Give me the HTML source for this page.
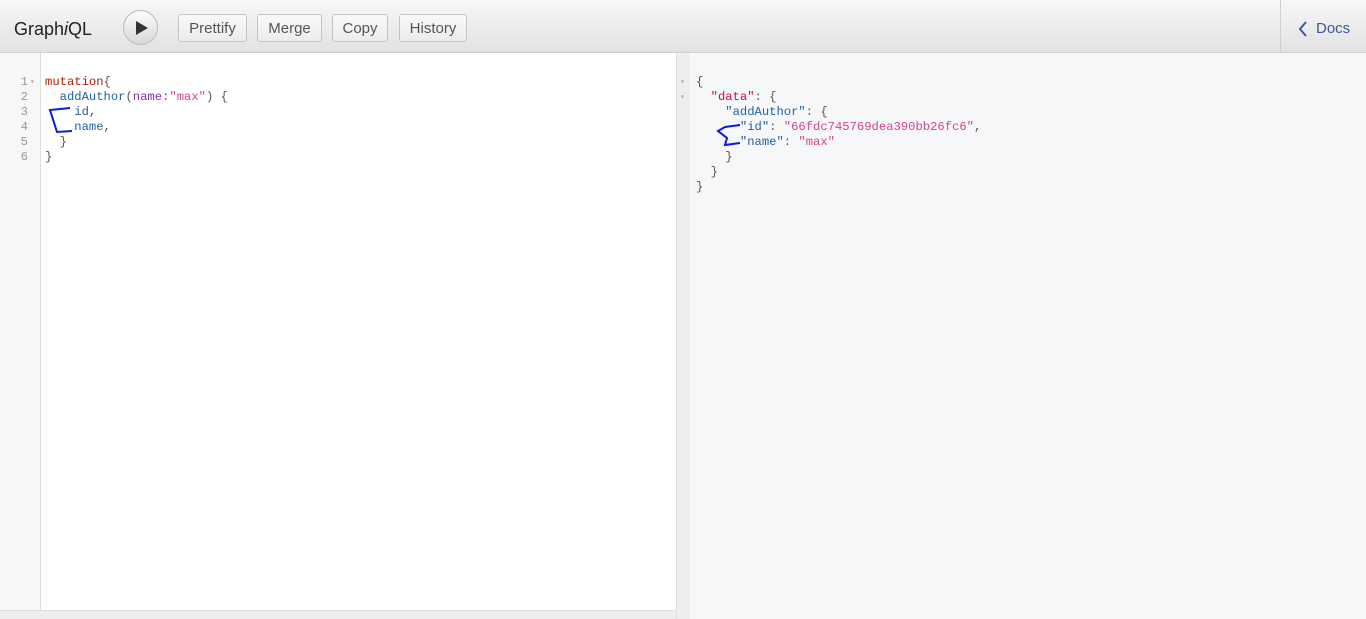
<!DOCTYPE html>
<html><head><meta charset="utf-8"><style>
*{box-sizing:border-box;margin:0;padding:0}
body{width:1366px;height:619px;overflow:hidden;background:#fff;font-family:"Liberation Sans",sans-serif;position:relative}
.bar{position:absolute;left:0;top:0;width:1366px;height:53px;background:linear-gradient(#f7f7f7,#e2e2e2);border-bottom:1px solid #d0d0d0}
.title{position:absolute;left:14px;top:19px;font-size:18px;color:#222}
.run{position:absolute;left:123px;top:10px;width:35px;height:35px;border-radius:50%;border:1px solid #bbb;background:linear-gradient(#fdfdfd,#d8d8d8)}
.run:after{content:"";position:absolute;left:12px;top:10px;border-left:12px solid #333;border-top:7px solid transparent;border-bottom:7px solid transparent}
.btn{position:absolute;top:14px;height:28px;border:1px solid #c4c4c4;border-radius:3px;background:linear-gradient(#f9f9f9,#ececec);font-size:15px;color:#555;text-align:center;line-height:28px}
.docs{position:absolute;left:1280px;top:0;width:86px;height:53px;border-left:1px solid #d0d0d0}
.docs span{position:absolute;left:35px;top:20px;font-size:15px;color:#3b5998}
.gut{position:absolute;left:0;top:53px;width:41px;height:557px;background:#f7f7f7;border-right:1px solid #ddd}
.code{position:absolute;font-family:"Liberation Mono",monospace;font-size:12.2px;line-height:15px;white-space:pre}
.ln{left:0;width:28px;text-align:right;color:#999}
.kw{color:#b11a04}.def{color:#d2054e}.fn{color:#1f61a0}.at{color:#8b2bb9}.str{color:#d64292}.p{color:#555}
.bot{position:absolute;left:0;top:610px;width:676px;height:9px;background:#eee;border-top:1px solid #ddd}
.div{position:absolute;left:676px;top:53px;width:14px;height:566px;background:#eee;border-left:1px solid #e0e0e0}
.res{position:absolute;left:690px;top:53px;width:676px;height:566px;background:#f6f7f8}
</style></head><body>
<div class="bar">
<div class="title">Graph<i>i</i>QL</div>
<div class="run"></div>
<div class="btn" style="left:178px;width:69px">Prettify</div>
<div class="btn" style="left:257px;width:65px">Merge</div>
<div class="btn" style="left:332px;width:56px">Copy</div>
<div class="btn" style="left:399px;width:68px">History</div>
<div class="docs"><svg style="position:absolute;left:17px;top:21px" width="10" height="16"><path d="M8 1 L2 8 L8 15" stroke="#3b5998" stroke-width="2" fill="none"/></svg><span>Docs</span></div>
</div>
<div class="gut"></div>
<div class="code ln" style="top:75px">1
2
3
4
5
6</div>
<div class="code" style="left:30px;top:75px;color:#aaa;font-size:8px">▾</div>
<div class="code p" style="left:45px;top:75px"><span class="kw">mutation</span>{
  <span class="fn">addAuthor</span>(<span class="at">name</span>:<span class="str">"max"</span>) {
    <span class="fn">id</span>,
    <span class="fn">name</span>,
  }
}</div>
<div class="bot"></div>
<div class="div"></div>
<div class="res"></div>
<div class="code" style="left:680px;top:75px;color:#aaa;font-size:8px;line-height:15px">▾
▾</div>
<div class="code p" style="left:696px;top:75px">{
  <span class="def">"data"</span>: {
    <span class="fn">"addAuthor"</span>: {
      <span class="fn">"id"</span>: <span class="str">"66fdc745769dea390bb26fc6"</span>,
      <span class="fn">"name"</span>: <span class="str">"max"</span>
    }
  }
}</div>
<svg style="position:absolute;left:0;top:0" width="1366" height="619">
<path d="M70 108 L50 110 L57 132 L72 131" stroke="#0a1be0" stroke-width="2" fill="none"/>
<path d="M740 125 L725 127 L718 131 L727 138 L725 145 L740 143" stroke="#0a1be0" stroke-width="2" fill="none"/>
</svg>
</body></html>
